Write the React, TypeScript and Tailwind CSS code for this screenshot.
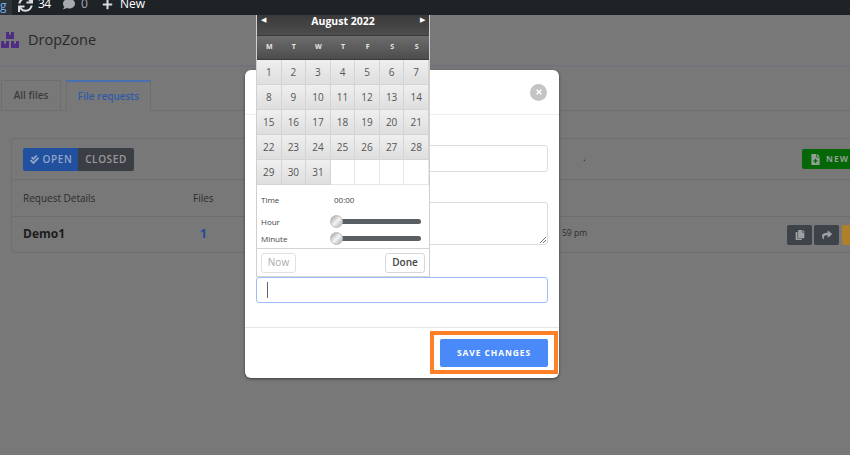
import { FaBoxes, FaCheckDouble, FaComment, FaCopy, FaFileMedical, FaPlus, FaShare, FaSync, FaTimes } from "react-icons/fa";

const weekDays = ["M", "T", "W", "T", "F", "S", "S"];
const days = Array.from({ length: 31 }, (_, i) => i + 1);

function AdminBar() {
  return (
    <div className="flex h-[15px] items-center overflow-hidden bg-[#1d2327] pb-[7px] text-[12px] text-white">
      <div className="-mb-[7px] flex h-[15px] w-[12px] items-start bg-[#2c3338] leading-[11px] text-[#72aee6]">g</div>
      <FaSync className="ml-[6px] size-[15px] shrink-0 text-[#dcdcde]" />
      <span className="ml-[5px] w-[13px] font-medium tracking-[-0.5px]">34</span>
      <FaComment className="ml-[12px] size-[12px] shrink-0 text-[#a7aaad]" />
      <span className="ml-[6px] text-[#a7aaad]">0</span>
      <FaPlus className="ml-[14px] size-[11px] shrink-0 text-[#dcdcde]" />
      <span className="ml-[7px] font-medium">New</span>
    </div>
  );
}

function Page() {
  return (
    <div className="h-[440px] bg-[#787878]">
      <div className="flex h-[52px] items-center gap-[9px] border-b-2 border-[#71737a] pl-[1px]">
        <FaBoxes className="size-[18px] text-[#4f2d85]" />
        <span className="text-[14.5px] font-medium text-[#26282b]">DropZone</span>
      </div>
      <div className="mt-[13px] flex h-[31px] items-end gap-[5px] border-b border-[#6e6e6e] pl-[1px]">
        <div className="flex h-[30px] w-[60px] items-center justify-center border border-b-0 border-[#6e6e6e] text-[10px] font-semibold text-[#3c3c3c]">All files</div>
        <div className="-mb-px flex h-[31px] w-[85px] items-center justify-center border border-b-0 border-[#6e6e6e] border-t-2 border-t-[#4a6fb0] bg-[#787878] text-[10px] font-semibold text-[#2f5aa8]">File requests</div>
      </div>
      <div className="ml-[11px] mt-[27px] w-[900px] rounded-[3px] border border-[#6e6e6e]">
        <div className="flex h-[41px] items-center border-b border-[#6e6e6e] pl-[11px]">
          <div className="flex h-[23px] shrink-0 overflow-hidden rounded-[2px] text-[10px] font-semibold tracking-[0.6px]">
            <div className="flex w-[55px] items-center justify-center gap-[4px] bg-[#21509e] pl-[1px] text-[#8fa6c8]"><FaCheckDouble className="size-[9px]" />OPEN</div>
            <div className="flex w-[56px] items-center justify-center bg-[#3b3f45] text-[#9a9a9a]">CLOSED</div>
          </div>
          <span className="ml-[449px] w-[219px] shrink-0 pb-[4px] text-[10px] text-[#222]">.</span>
          <div className="flex h-[20px] w-[100px] shrink-0 items-center gap-[5px] rounded-[2px] bg-[#056705] pl-[8px] text-[8.5px] font-bold tracking-[1.1px] text-[#8fa096]">
            <FaFileMedical className="size-[11px]" />NEW REQUEST
          </div>
        </div>
        <div className="flex h-[37px] items-center border-b border-[#6e6e6e] pl-[11px] pt-[1px] text-[10px] text-[#2c2c2c]">
          <span className="w-[170px]">Request Details</span>
          <span>Files</span>
        </div>
        <div className="flex h-[35px] items-center pl-[11px]">
          <span className="w-[177px] pb-[2px] text-[12px] font-bold text-[#1c1c1c]">Demo1</span>
          <span className="w-[362px] pb-[2px] text-[12px] font-bold text-[#1f4aa0]">1</span>
          <span className="w-[225px] pb-[2px] text-[8.5px] text-[#2c2c2c]">59 pm</span>
          <div className="flex gap-[2px] text-[#9c9fa3]">
            <div className="flex h-[20px] w-[25px] items-center justify-center rounded-[2px] bg-[#3e434a]"><FaCopy className="size-[10px]" /></div>
            <div className="flex h-[20px] w-[25px] items-center justify-center rounded-[2px] bg-[#3e434a]"><FaShare className="size-[10px]" /></div>
            <div className="ml-px h-[20px] w-[25px] rounded-[2px] bg-[#b07f2a]" />
          </div>
        </div>
      </div>
    </div>
  );
}

function Modal() {
  return (
    <div className="absolute left-[245px] top-[70px] flex h-[308px] w-[314px] flex-col rounded-[6px] bg-white shadow-[0_1px_3px_rgba(0,0,0,0.5)]">
      <div className="flex h-[45px] items-center justify-end border-b border-[#eeeeee] pr-[12px]">
        <div className="flex size-[17px] items-center justify-center rounded-full bg-[#c4c4c4] text-white"><FaTimes className="size-[8px]" /></div>
      </div>
      <div className="flex flex-1 flex-col px-[11px]">
        <div className="mt-[30px] h-[27px] rounded-[3px] border border-[#dddddd]" />
        <div className="relative mt-[30px] h-[43px] rounded-[3px] border border-[#dddddd]">
          <svg className="absolute bottom-px right-px size-[7px] text-[#777]" viewBox="0 0 7 7" fill="none" stroke="currentColor">
            <path d="M1 7 7 1M4 7l3-3" />
          </svg>
        </div>
        <div className="mt-[32px] flex h-[26px] items-center rounded-[3px] border border-[#9cbdf8] pl-[10px]">
          <div className="h-[16px] w-px bg-[#666]" />
        </div>
      </div>
      <div className="flex h-[51px] items-start justify-end border-t border-[#e6e6e6] pr-[11px] pt-[11px]">
        <div className="flex h-[28px] w-[108px] items-center justify-center rounded-[2px] bg-[#4a8af8] text-[8.5px] font-bold tracking-[0.9px] text-white">SAVE CHANGES</div>
      </div>
    </div>
  );
}

function Slider({ label }: { label: string }) {
  return (
    <div className="flex h-[17px] items-center text-[8px] text-[#444]">
      <span className="w-[72px]">{label}</span>
      <div className="relative h-[5px] w-[88px] rounded-full bg-[#5a5f63]">
        <div className="absolute -left-[3px] -top-[4px] size-[13px] rounded-full border border-[#bbb] bg-[linear-gradient(135deg,#999,#f4f4f4,#aaa)]" />
      </div>
    </div>
  );
}

function DatePicker() {
  return (
    <div className="absolute left-[256px] top-[15px] w-[174px] border-x border-[#cfcfcf] bg-white">
      <div className="flex h-[20px] items-start justify-between bg-[linear-gradient(#3a3a3a,#4d4d4d)] px-[4px] text-[7px] leading-[10px] text-white">
        <span>◀</span>
        <span className="pt-[1px] text-[10.5px] font-bold">August 2022</span>
        <span>▶</span>
      </div>
      <div className="grid h-[25px] grid-cols-7 items-center border-y border-[#3a3a3a] bg-[linear-gradient(#6d6d6d,#4c4c4c)] text-center text-[7px] font-bold text-[#e6e6e6]">
        {weekDays.map((d, i) => (
          <span key={i}>{d}</span>
        ))}
      </div>
      <div className="grid grid-cols-7">
        {days.map((d) => (
          <div key={d} className="flex h-[25px] items-center justify-center border-b border-r border-[#d4d4d4] bg-[linear-gradient(#efefef,#dedede)] text-[10px] font-medium text-[#555]">
            {d}
          </div>
        ))}
        {[0, 1, 2, 3].map((i) => (
          <div key={i} className="h-[25px] border-b border-r border-[#e6e6e6]" />
        ))}
      </div>
      <div className="border-b border-[#d4d4d4] px-[4px] pb-[1px] pt-[6px]">
        <div className="mb-[5px] flex h-[17px] items-center text-[8px] text-[#444]">
          <span className="w-[73px]">Time</span>
          <span>00:00</span>
        </div>
        <Slider label="Hour" />
        <Slider label="Minute" />
      </div>
      <div className="flex h-[28px] items-center justify-between border-b border-[#d8d8d8] px-[4px]">
        <div className="flex h-[20px] w-[35px] items-center justify-center rounded-[3px] border border-[#e2e2e2] text-[10px] font-medium text-[#aaa]">Now</div>
        <div className="flex h-[20px] w-[40px] items-center justify-center rounded-[3px] border border-[#d8d8d8] text-[10px] font-semibold text-[#444]">Done</div>
      </div>
    </div>
  );
}

export default function App() {
  return (
    <div className="relative h-[455px] w-[850px] overflow-hidden font-['Open_Sans',sans-serif]">
      <AdminBar />
      <Page />
      <Modal />
      <DatePicker />
      <div className="absolute left-[430px] top-[331px] h-[43px] w-[128px] border-[4px] border-[#ff7f27]" />
    </div>
  );
}
